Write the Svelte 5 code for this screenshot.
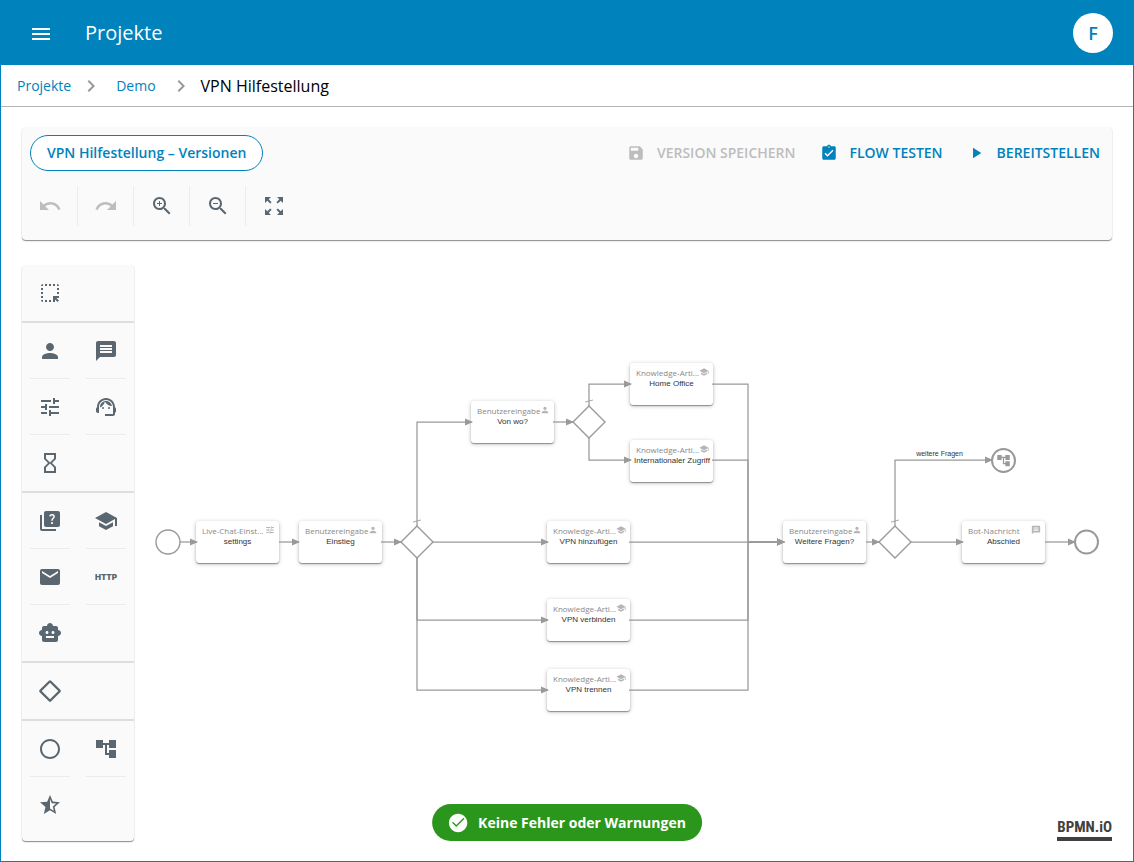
<script>
  const icons = {
    menu: 'M3 18h18v-2H3v2zm0-5h18v-2H3v2zm0-7v2h18V6H3z',
    chevron: 'M10 6L8.59 7.41 13.17 12l-4.58 4.59L10 18l6-6z',
    save: 'M17 3H5c-1.11 0-2 .9-2 2v14c0 1.1.89 2 2 2h14c1.1 0 2-.9 2-2V7l-4-4zm-5 16c-1.66 0-3-1.34-3-3s1.34-3 3-3 3 1.34 3 3-1.34 3-3 3zm3-10H5V5h10v4z',
    test: 'M19 3h-4.18C14.4 1.84 13.3 1 12 1c-1.3 0-2.4.84-2.82 2H5c-1.1 0-2 .9-2 2v14c0 1.1.9 2 2 2h14c1.1 0 2-.9 2-2V5c0-1.1-.9-2-2-2zm-7 0c.55 0 1 .45 1 1s-.45 1-1 1-1-.45-1-1 .45-1 1-1zm-2 14l-4-4 1.41-1.41L10 14.17l6.59-6.59L18 9l-8 8z',
    play: 'M8 5v14l11-7z',
    undo: 'M12.5 8c-2.65 0-5.05.99-6.9 2.6L2 7v9h9l-3.62-3.62c1.39-1.16 3.16-1.88 5.12-1.88 3.54 0 6.55 2.31 7.6 5.5l2.37-.78C21.08 11.03 17.15 8 12.5 8z',
    redo: 'M18.4 10.6C16.55 8.99 14.15 8 11.5 8c-4.65 0-8.58 3.03-9.96 7.22L3.9 16c1.05-3.19 4.05-5.5 7.6-5.5 1.95 0 3.73.72 5.12 1.88L13 16h9V7l-3.6 3.6z',
    zoomIn: 'M15.5 14h-.79l-.28-.27C15.41 12.59 16 11.11 16 9.5 16 5.91 13.09 3 9.5 3S3 5.91 3 9.5 5.91 16 9.5 16c1.61 0 3.09-.59 4.23-1.57l.27.28v.79l5 4.99L20.49 19l-4.99-5zm-6 0C7.01 14 5 11.99 5 9.5S7.01 5 9.5 5 14 7.01 14 9.5 11.99 14 9.5 14zM12 10h-2v2H9v-2H7V9h2V7h1v2h2v1z',
    zoomOut: 'M15.5 14h-.79l-.28-.27C15.41 12.59 16 11.11 16 9.5 16 5.91 13.09 3 9.5 3S3 5.91 3 9.5 5.91 16 9.5 16c1.61 0 3.09-.59 4.23-1.57l.27.28v.79l5 4.99L20.49 19l-4.99-5zm-6 0C7.01 14 5 11.99 5 9.5S7.01 5 9.5 5 14 7.01 14 9.5 11.99 14 9.5 14zM7 9h5v1H7z',
    fit: 'M15 3l2.3 2.3-2.89 2.87 1.42 1.42L18.7 6.7 21 9V3zM3 9l2.3-2.3 2.87 2.89 1.42-1.42L6.7 5.3 9 3H3zm6 12l-2.3-2.3 2.89-2.87-1.42-1.42L5.3 17.3 3 15v6zm12-6l-2.3 2.3-2.87-2.89-1.42 1.42 2.89 2.87L15 21h6z',
    select: 'M17 5h-2V3h2v2zm-2 16h2v-2.59L19.59 21 21 19.59 18.41 17H21v-2h-6v6zm4-12h2V7h-2v2zm0 4h2v-2h-2v2zm-8 8h2v-2h-2v2zM7 5h2V3H7v2zM3 17h2v-2H3v2zm2 4v-2H3c0 1.1.9 2 2 2zM19 3v2h2c0-1.1-.9-2-2-2zm-8 2h2V3h-2v2zM3 9h2V7H3v2zm4 12h2v-2H7v2zm-4-8h2v-2H3v2zm0-8h2V3c-1.1 0-2 .9-2 2z',
    person: 'M12 12c2.21 0 4-1.79 4-4s-1.79-4-4-4-4 1.79-4 4 1.79 4 4 4zm0 2c-2.67 0-8 1.34-8 4v2h16v-2c0-2.66-5.33-4-8-4z',
    message: 'M20 2H4c-1.1 0-1.99.9-1.99 2L2 22l4-4h14c1.1 0 2-.9 2-2V4c0-1.1-.9-2-2-2zm-2 12H6v-2h12v2zm0-3H6V9h12v2zm0-3H6V6h12v2z',
    tune: 'M3 17v2h6v-2H3zM3 5v2h10V5H3zm10 16v-2h8v-2h-8v-2h-2v6h2zM7 9v2H3v2h4v2h2V9H7zm14 4v-2H11v2h10zm-6-4h2V7h4V5h-4V3h-2v6z',
    agent: 'M21 12.22C21 6.73 16.74 3 12 3c-4.69 0-9 3.65-9 9.28-.6.34-1 .98-1 1.72v2c0 1.1.9 2 2 2h1v-6.1c0-3.87 3.13-7 7-7s7 3.13 7 7V19h-8v2h8c1.1 0 2-.9 2-2v-1.22c.59-.31 1-.92 1-1.64v-2.3c0-.7-.41-1.31-1-1.62zM8 13a1 1 0 1 0 2 0a1 1 0 1 0-2 0zM14 13a1 1 0 1 0 2 0a1 1 0 1 0-2 0zM18 11.03C17.52 8.18 15.04 6 12.05 6c-3.03 0-6.29 2.51-6.03 6.45 2.47-1.01 4.33-3.21 4.86-5.89 1.31 2.63 4 4.44 7.12 4.47z',
    hourglass: 'M6 2v6h.01L6 8.01 10 12l-4 4 .01.01H6V22h12v-5.99h-.01L18 16l-4-4 4-3.99-.01-.01H18V2H6zm10 14.5V20H8v-3.5l4-4 4 4zm-4-5l-4-4V4h8v3.5l-4 4z',
    quiz: 'M4 6H2v14c0 1.1.9 2 2 2h14v-2H4V6zM20 2H8c-1.1 0-2 .9-2 2v12c0 1.1.9 2 2 2h12c1.1 0 2-.9 2-2V4c0-1.1-.9-2-2-2zm-5.99 13c-.59 0-1.05-.47-1.05-1.05 0-.59.47-1.04 1.05-1.04.59 0 1.04.45 1.04 1.04-.01.58-.45 1.05-1.04 1.05zm2.5-6.17c-.63.93-1.23 1.21-1.56 1.81-.13.24-.18.4-.18 1.18h-1.52c0-.41-.06-1.08.26-1.65.41-.73 1.18-1.16 1.63-1.8.48-.68.21-1.94-1.14-1.94-.88 0-1.32.67-1.5 1.23l-1.37-.57C11.51 5.96 12.52 5 13.99 5c1.23 0 2.08.56 2.51 1.26.37.61.58 1.73.01 2.57z',
    school: 'M5 13.18v4L12 21l7-3.82v-4L12 17l-7-3.82zM12 3L1 9l11 6 9-4.91V17h2V9L12 3z',
    mail: 'M20 4H4c-1.1 0-1.99.9-1.99 2L2 18c0 1.1.9 2 2 2h16c1.1 0 2-.9 2-2V6c0-1.1-.9-2-2-2zm0 4l-8 5-8-5V6l8 5 8-5v2z',
    robot: 'M20 9V7c0-1.1-.9-2-2-2h-3c0-1.66-1.34-3-3-3S9 3.34 9 5H6c-1.1 0-2 .9-2 2v2c-1.66 0-3 1.34-3 3s1.34 3 3 3v4c0 1.1.9 2 2 2h12c1.1 0 2-.9 2-2v-4c1.66 0 3-1.34 3-3s-1.34-3-3-3zM7.5 11.5c0-.83.67-1.5 1.5-1.5s1.5.67 1.5 1.5S9.83 13 9 13s-1.5-.67-1.5-1.5zM16 17H8v-2h8v2zm-1-4c-.83 0-1.5-.67-1.5-1.5S14.17 10 15 10s1.5.67 1.5 1.5S15.83 13 15 13z',
    gateway: 'M12 1.2a1.6 1.6 0 0 1 1.15.48l9.17 9.17a1.6 1.6 0 0 1 0 2.3l-9.17 9.17a1.6 1.6 0 0 1-2.3 0l-9.17-9.17a1.6 1.6 0 0 1 0-2.3l9.17-9.17A1.6 1.6 0 0 1 12 1.2zm0 2.5L3.7 12l8.3 8.3 8.3-8.3z',
    circle: 'M12 2C6.47 2 2 6.47 2 12s4.47 10 10 10 10-4.47 10-10S17.53 2 12 2zm0 18c-4.41 0-8-3.59-8-8s3.59-8 8-8 8 3.59 8 8-3.59 8-8 8z',
    tree: 'M22 11V3h-7v3H9V3H2v8h7V8h2v10h4v3h7v-8h-7v3h-2V8h2v3z',
    star: 'M22 9.24l-7.19-.62L12 2 9.19 8.63 2 9.24l5.46 4.73L5.82 21 12 17.27 18.18 21l-1.63-7.03L22 9.24zM12 15.4V6.1l1.71 4.04 4.38.38-3.32 2.88 1 4.28L12 15.4z',
    check: 'M12 2C6.48 2 2 6.48 2 12s4.48 10 10 10 10-4.48 10-10S17.52 2 12 2zm-2 14.3l-4.6-4.6 1-1L10 14.3l7.9-7.9 1 1L10 16.3z'
  };

  const tools = [
    { icon: 'undo', disabled: true },
    { icon: 'redo', disabled: true },
    { icon: 'zoomIn' },
    { icon: 'zoomOut' },
    { icon: 'fit' }
  ];

  const palette = [
    ['select'],
    ['person', 'message', 'tune', 'agent', 'hourglass'],
    ['quiz', 'school', 'mail', 'http', 'robot'],
    ['gateway'],
    ['circle', 'tree', 'star']
  ];

  const nodes = [
    { x: 62, y: 256, type: 'Live-Chat-Einst...', name: 'settings', icon: 'tune' },
    { x: 165, y: 256, type: 'Benutzereingabe', name: 'Einstieg', icon: 'person' },
    { x: 337, y: 136, type: 'Benutzereingabe', name: 'Von wo?', icon: 'person' },
    { x: 496, y: 98, type: 'Knowledge-Arti...', name: 'Home Office', icon: 'school' },
    { x: 496, y: 175, type: 'Knowledge-Arti...', name: 'Internationaler Zugriff', icon: 'school' },
    { x: 413, y: 256, type: 'Knowledge-Arti...', name: 'VPN hinzufügen', icon: 'school' },
    { x: 413, y: 334, type: 'Knowledge-Arti...', name: 'VPN verbinden', icon: 'school' },
    { x: 413, y: 404, type: 'Knowledge-Arti...', name: 'VPN trennen', icon: 'school' },
    { x: 649, y: 256, type: 'Benutzereingabe', name: 'Weitere Fragen?', icon: 'person' },
    { x: 828, y: 256, type: 'Bot-Nachricht', name: 'Abschied', icon: 'message' }
  ];

  const flows = [
    'M46 277H63', 'M145 277H165', 'M247 277H267',
    'M283 261V157H338', 'M299 277H414', 'M283 293V355H414', 'M283 293V425H414',
    'M419 157H439', 'M455 141V119H497', 'M455 173V195H497',
    'M578 119H614V277H650', 'M578 195H614V277H650', 'M495 277H650',
    'M495 355H614V277H650', 'M495 425H614V277H650',
    'M732 277H745', 'M761 261V195H858', 'M777 277H829', 'M911 277H941'
  ];

  const gateways = [[283, 277], [455, 157], [761, 277]];
</script>

{#snippet icon(name, size = 24)}
  <svg class="icon" width={size} height={size} viewBox="0 0 24 24" aria-hidden="true"><path d={icons[name]} /></svg>
{/snippet}

<div class="app">
  <header>
    <button class="menu" aria-label="Menü">{@render icon('menu')}</button>
    <h1>Projekte</h1>
    <button class="avatar">F</button>
  </header>

  <nav class="crumbs">
    <a href="#projekte">Projekte</a>
    {@render icon('chevron')}
    <a class="inner" href="#demo">Demo</a>
    {@render icon('chevron')}
    <span class="current">VPN Hilfestellung</span>
  </nav>

  <main>
    <section class="toolbar">
      <div class="top">
        <button class="versions">VPN Hilfestellung – Versionen</button>
        <div class="actions">
          <button disabled>{@render icon('save', 18)}VERSION SPEICHERN</button>
          <button>{@render icon('test', 18)}FLOW TESTEN</button>
          <button>{@render icon('play', 18)}BEREITSTELLEN</button>
        </div>
      </div>
      <div class="tools">
        {#each tools as tool}
          <button disabled={tool.disabled} aria-label={tool.icon}>{@render icon(tool.icon)}</button>
        {/each}
      </div>
    </section>

    <div class="workspace">
      <aside class="palette">
        {#each palette as group}
          <div class="group">
            {#each group as item}
              <button aria-label={item}>
                {#if item === 'http'}<span class="http">HTTP</span>{:else}{@render icon(item)}{/if}
              </button>
            {/each}
          </div>
        {/each}
      </aside>

      <section class="canvas">
        <svg class="flows" aria-hidden="true">
          <defs>
            <marker id="arrow" viewBox="0 0 8 8" refX="7" refY="4" markerWidth="8" markerHeight="8" markerUnits="userSpaceOnUse" orient="auto">
              <path d="M0 0.5L8 4L0 7.5z" fill="#999" />
            </marker>
          </defs>
          {#each gateways as [x, y]}
            <path class="shape" d="M{x} {y - 16}L{x + 16} {y}L{x} {y + 16}L{x - 16} {y}z" />
            <path class="slash" d="M{x - 4} {y - 20}L{x + 4} {y - 22}" />
          {/each}
          <circle class="shape" cx="34" cy="277" r="12" />
          <circle class="shape end" cx="952.5" cy="277" r="11.5" />
          <circle class="shape end" cx="869.5" cy="195.5" r="11.5" />
          <path transform="translate(862 188) scale(.625)" fill="#999" d={icons.tree} />
          <text x="805.5" y="191" text-anchor="middle">weitere Fragen</text>
        </svg>
        {#each nodes as node}
          <article class="node" style="left:{node.x}px;top:{node.y}px">
            <div class="kind"><span>{node.type}</span>{@render icon(node.icon, 10)}</div>
            <div class="name">{node.name}</div>
          </article>
        {/each}
        <svg class="flows" aria-hidden="true">
          {#each flows as d}
            <path {d} class="flow" marker-end="url(#arrow)" />
          {/each}
        </svg>
      </section>
    </div>
  </main>

  <div class="status" role="status">{@render icon('check', 22)}Keine Fehler oder Warnungen</div>
  <a class="logo" href="#bpmn">BPMN.iO</a>
</div>

<style>
  :global(body) { margin: 0; background: #fff; }
  * { box-sizing: border-box; }
  .app {
    position: relative;
    display: flex;
    flex-direction: column;
    min-height: 100vh;
    border: 1px solid #0082bc;
    font-family: 'Open Sans', sans-serif;
    font-size: 14px;
    line-height: 20px;
    color: #000;
  }
  button {
    padding: 0;
    border: 0;
    background: none;
    font: inherit;
    color: inherit;
    cursor: pointer;
  }
  a { color: #0082bc; text-decoration: none; }
  .icon { display: block; flex: none; fill: currentColor; }
  header {
    display: flex;
    align-items: center;
    height: 64px;
    padding: 0 20px 0 28px;
    background: #0082bc;
    color: #fff;
  }
  .menu { padding-top: 2px; }
  h1 { flex: 1; margin: 0 0 0 32px; font-size: 20px; font-weight: 500; line-height: 24px; }
  .avatar {
    width: 40px;
    height: 40px;
    border-radius: 50%;
    background: #fff;
    color: #0082bc;
    font-size: 18px;
    font-weight: 600;
  }
  .crumbs {
    display: flex;
    align-items: center;
    height: 42px;
    padding: 0 16px;
    border-bottom: 1px solid #b5b5b5;
  }
  .crumbs .icon { margin: 0 8px; color: #999; }
  .inner { padding: 0 5px; }
  .current { font-size: 16px; }
  main { flex: 1; padding: 20px 21px; }
  .toolbar, .palette {
    border-radius: 4px;
    background: #fafafa;
    box-shadow: 0 1px 1px rgba(0, 0, 0, .4), 0 1px 2px rgba(0, 0, 0, .1);
  }
  .toolbar { padding: 8px 0 6px; }
  .top { display: flex; justify-content: space-between; align-items: center; padding: 0 12px 0 8px; }
  .versions {
    height: 36px;
    padding: 0 16px;
    border: 1px solid #0082bc;
    border-radius: 18px;
    background: #fff;
    color: #0082bc;
    font-weight: 600;
  }
  .actions { display: flex; gap: 24px; color: #0082bc; font-weight: 600; }
  .actions button { display: flex; align-items: center; gap: 12px; }
  .actions button:disabled, .tools button:disabled { color: #bdbdbd; }
  .tools { display: flex; padding-top: 15px; color: #5b6770; }
  .tools button {
    display: grid;
    place-items: center;
    width: 56px;
    height: 40px;
    margin-bottom: 8px;
    border-right: 1px solid #ececec;
  }
  .tools button:last-child { border-right-color: transparent; }
  .workspace { display: flex; align-items: flex-start; margin-top: 25px; }
  .palette { flex: none; width: 112px; padding-bottom: 8px; color: #5b6770; }
  .group { display: grid; grid-template-columns: 1fr 1fr; }
  .group + .group { border-top: 2px solid #dedede; }
  .group button {
    display: grid;
    place-items: center;
    height: 56px;
    background: linear-gradient(#ececec, #ececec) center bottom / 40px 1px no-repeat;
  }
  .group button:last-child:nth-child(odd) { background: none; }
  .http { font-family: Inter, sans-serif; font-size: 8px; font-weight: 900; line-height: 12px; }
  .canvas { position: relative; flex: 1; align-self: stretch; min-width: 0; }
  .flows { position: absolute; inset: 0; width: 100%; height: 100%; overflow: visible; pointer-events: none; }
  .flow { fill: none; stroke: #999; stroke-width: 1.25; }
  .shape { fill: #fff; stroke: #999; stroke-width: 1.4; }
  .end { stroke-width: 2; }
  .slash { stroke: #aaa; }
  text { font: 7px 'Liberation Sans', sans-serif; fill: #333; }
  .node {
    position: absolute;
    width: 83px;
    height: 42px;
    padding: 4px 4px 0 6px;
    border-radius: 3px;
    background: #fff;
    box-shadow: 0 1px 1px rgba(0, 0, 0, .35), 0 1px 4px rgba(0, 0, 0, .25);
  }
  .kind { display: flex; justify-content: space-between; height: 11px; font-size: 8px; font-weight: 500; line-height: 12px; color: #888; white-space: nowrap; }
  .kind .icon { color: #b5b5b5; }
  .name { margin-left: -2px; font: 8px/12px 'Liberation Sans', sans-serif; text-align: center; white-space: nowrap; color: #333; }
  .status {
    position: absolute;
    bottom: 20px;
    left: 50%;
    transform: translateX(-50%);
    display: flex;
    align-items: center;
    gap: 9px;
    height: 37px;
    padding: 0 16px 0 15px;
    border-radius: 19px;
    background: #2b961c;
    color: #fff;
    font-weight: 700;
    white-space: nowrap;
  }
  .logo {
    position: absolute;
    right: 21px;
    bottom: 20px;
    border-bottom: 4px solid #404040;
    color: #404040;
    font: 700 15px/20px 'Liberation Sans Narrow', 'Roboto Condensed', Roboto, sans-serif;
  }
</style>
